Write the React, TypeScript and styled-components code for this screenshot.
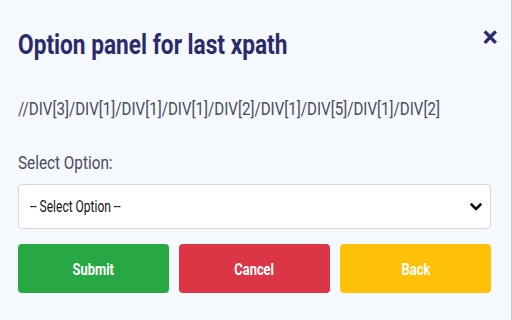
import React from 'react';
import styled, { createGlobalStyle } from 'styled-components';

const GlobalStyle = createGlobalStyle`
  html, body {
    margin: 0;
    padding: 0;
    background: #f5f9fe;
    font-family: Roboto, "Liberation Sans", sans-serif;
  }
`;

const Panel = styled.div`
  box-sizing: border-box;
  width: 512px;
  height: 320px;
  overflow: hidden;
  padding: 27px 20px 0 18px;
  background: #f5f9fe;
  border-right: 1px solid #c9ccd2;
`;

const Header = styled.div`
  display: flex;
  justify-content: space-between;
  align-items: flex-start;
`;

// the text in the shot is narrower than plain Roboto, so squeeze it a bit
const Narrow = styled.span<{ $x: number; $center?: boolean }>`
  display: inline-block;
  white-space: nowrap;
  transform: scaleX(${({ $x }) => $x});
  transform-origin: ${({ $center }) => ($center ? 'center' : 'left center')};
`;

const Title = styled.h2`
  margin: 0;
  font-size: 28px;
  font-weight: 700;
  color: #2b2a6b;
  line-height: 36px;
`;

const Close = styled.button`
  border: none;
  background: none;
  padding: 0;
  margin-right: -7px;
  margin-top: -8px;
  color: #2b2a6b;
  font-family: Roboto, "Liberation Sans", sans-serif;
  font-size: 29px;
  line-height: 36px;
  font-weight: 700;
  cursor: pointer;
`;

const XPath = styled.p`
  margin: 35px 0 0;
  overflow: hidden;
  font-size: 19px;
  line-height: 22px;
  color: #4a4b5c;
`;

const Label = styled.label`
  display: block;
  margin-top: 32px;
  font-size: 18px;
  line-height: 22px;
  color: #4a4b5c;
`;

const SelectBox = styled.div`
  display: flex;
  align-items: center;
  justify-content: space-between;
  box-sizing: border-box;
  height: 45px;
  margin-top: 10px;
  padding: 0 7px 0 11px;
  font-size: 16px;
  color: #111;
  background: #fff;
  border: 1px solid #d5d8dd;
  border-radius: 4px;
  cursor: pointer;
`;

const Buttons = styled.div`
  display: grid;
  grid-template-columns: repeat(3, 1fr);
  gap: 10px;
  margin-top: 15px;
`;

const Btn = styled.button<{ $bg: string }>`
  display: flex;
  align-items: center;
  justify-content: center;
  height: 49px;
  border: none;
  border-radius: 4px;
  background: ${({ $bg }) => $bg};
  color: #fff;
  font-family: Roboto, "Liberation Sans", sans-serif;
  font-size: 17px;
  font-weight: 700;
  cursor: pointer;
`;

const Chevron = () => (
  <svg width="14" height="14" viewBox="0 0 14 14">
    <path d="M2.5 4.5 L7 9 L11.5 4.5" fill="none" stroke="#111" strokeWidth="2.6" strokeLinecap="round" strokeLinejoin="round" />
  </svg>
);

export default function App() {
  return (
    <>
      <GlobalStyle />
      <Panel>
        <Header>
          <Title>
            <Narrow $x={0.81}>Option panel for last xpath</Narrow>
          </Title>
          <Close>×</Close>
        </Header>
        <XPath>
          <Narrow $x={0.795}>//DIV[3]/DIV[1]/DIV[1]/DIV[1]/DIV[2]/DIV[1]/DIV[5]/DIV[1]/DIV[2]</Narrow>
        </XPath>
        <Label>
          <Narrow $x={0.85}>Select Option:</Narrow>
        </Label>
        <SelectBox role="combobox">
          <Narrow $x={0.75}>-- Select Option --</Narrow>
          <Chevron />
        </SelectBox>
        <Buttons>
          <Btn $bg="#28a745">
            <Narrow $x={0.76} $center>Submit</Narrow>
          </Btn>
          <Btn $bg="#dc3545">
            <Narrow $x={0.76} $center>Cancel</Narrow>
          </Btn>
          <Btn $bg="#ffc107">
            <Narrow $x={0.76} $center>Back</Narrow>
          </Btn>
        </Buttons>
      </Panel>
    </>
  );
}
